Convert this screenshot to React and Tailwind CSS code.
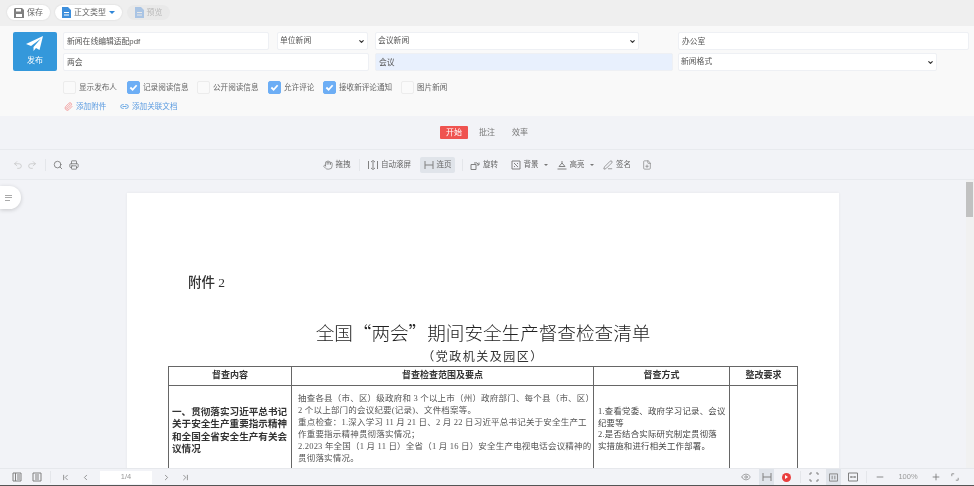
import React from "react";
import { ChevronDown, ChevronFirst, ChevronLast, ChevronLeft, ChevronRight, Eye, FilePlus, Hand, Link2, Minus, Paperclip, PenLine, Plus, Printer, Redo2, Search, Undo2 } from "lucide-react";

const cjk = "font-['Liberation_Sans','Noto_Sans_CJK_SC',sans-serif]";
const serif = "font-['Liberation_Serif','Noto_Sans_CJK_SC',serif]";

function Check({ on, label, gap }) {
  return (
    <label className={`flex items-center gap-[3px] ${gap}`}>
      <span className={`w-[13px] h-[13px] rounded-[2px] border flex items-center justify-center ${on ? "bg-[#6daef5] border-[#6daef5]" : "bg-[#fafafa] border-[#ececec]"}`}>
        {on && (
          <svg width="9" height="9" viewBox="0 0 10 10" fill="none" stroke="white" strokeWidth="2">
            <path d="M1.5 5 L4 7.5 L8.5 2.5" />
          </svg>
        )}
      </span>
      <span className="text-[7.6px] text-[#666]">{label}</span>
    </label>
  );
}

function Field({ w, value, bg = "bg-white" }) {
  return (
    <input
      readOnly
      value={value}
      className={`block h-[18px] ${w} ${bg} border border-[#eef0f4] rounded-[2px] px-[3px] pb-[2px] text-[7.8px] text-[#555] outline-none`}
    />
  );
}

function Drop({ w, value }) {
  return (
    <div className={`relative h-[18px] ${w}`}>
      <select
        value={value}
        onChange={() => {}}
        className="block appearance-none w-full h-full bg-white border border-[#eef0f4] rounded-[2px] pl-[2px] text-[7.8px] text-[#555] outline-none"
      >
        <option>{value}</option>
      </select>
      <ChevronDown size={7} strokeWidth={4} className="absolute right-[3px] top-[6px] text-[#333] pointer-events-none" />
    </div>
  );
}

function Pill({ icon, label, w, disabled, caret }) {
  return (
    <button className={`h-[15px] ${w} rounded-full flex items-center justify-center gap-[3px] text-[8px] ${disabled ? "bg-[#e9e9e9] text-[#bbb]" : "bg-white text-[#666] shadow-[0_0_2px_rgba(0,0,0,0.12)]"}`}>
      {icon}
      {label}
      {caret && <span className="w-0 h-0 border-x-[3px] border-x-transparent border-t-[3px] border-t-[#2f86d8]" />}
    </button>
  );
}

function Tool({ icon, label, w, active, caret }) {
  return (
    <div className={`h-[16px] ${w} flex items-center justify-center gap-[3px] whitespace-nowrap rounded-[2px] text-[7.5px] text-[#666] shrink-0 ${active ? "bg-[#e0e4ea]" : ""}`}>
      {icon}
      {label}
      {caret && <span className="ml-[2px] w-0 h-0 border-x-[2px] border-x-transparent border-t-[2px] border-t-[#777]" />}
    </div>
  );
}

const Sep = ({ h = "h-[12px]", m = "" }) => <span className={`w-px ${h} bg-[#e4e6ea] shrink-0 ${m}`} />;
const ic = { size: 10, strokeWidth: 1.5 };

// small toolbar drawings that the icon packages do not have
function Svg({ d, s = 10 }) {
  return (
    <svg width={s} height={s} viewBox="0 0 10 10" fill="none" stroke="#808080" strokeWidth="1" className="shrink-0">
      <path d={d} />
    </svg>
  );
}
const HPage = () => <Svg d="M1 1 V9 M9 1 V9 M1 5 H9" />;
const AutoScroll = () => <Svg d="M.5 1 V9 M9.5 1 V9 M5 1.5 V8.5 M3 2 L5 .5 L7 2 M3 8 L5 9.5 L7 8" />;
const Rotate = () => <Svg d="M1 4.5 H6 V9.5 H1 Z M4 3 A4 4 0 0 1 9 5 M9 2.5 V5 H6.8" />;
const Background = () => <Svg d="M1 1 H9 V9 H1 Z M3 3 L7 7 M3 6 L4 7 M6 3 L7 4" />;
const Highlight = () => <Svg d="M2 6.5 L5 3 L8 6.5 M5 1 V3 M.5 9 H9.5 M2 6.5 H8" />;
const ListLeft = () => <Svg d="M1 1 H9 V9 H1 Z M3.5 1 V9 M5 3 H8 M5 5 H8 M5 7 H8" />;
const ListRight = () => <Svg d="M1 1 H9 V9 H1 Z M3 3 H7 M3 5 H7 M3 7 H7" />;
const Corners = () => <Svg d="M1 3 V1 H3 M7 1 H9 V3 M9 7 V9 H7 M3 9 H1 V7" />;
const Columns = () => <Svg s={9} d="M.5 1 H9.5 V9 H.5 Z M3.5 3 V7 M6.5 3 V7" />;
const FitWidth = () => <Svg d="M.5 1 H9.5 V9 H.5 Z M2.5 5 H7.5 M3.5 4 L2.5 5 L3.5 6 M6.5 4 L7.5 5 L6.5 6" />;
const FitSmall = () => <Svg s={8} d="M1 4 V1 H4 M6 9 H9 V6" />;

const col2 = [
  "抽查各县（市、区）级政府和 3 个以上市（州）政府部门、每个县（市、区）",
  "2 个以上部门的会议纪要(记录)、文件档案等。",
  "重点检查：1.深入学习 11 月 21 日、2 月 22 日习近平总书记关于安全生产工",
  "作重要指示精神贯彻落实情况；",
  "2.2023 年全国（1 月 11 日）全省（1 月 16 日）安全生产电视电话会议精神的",
  "贯彻落实情况。",
];
const col1 = ["一、贯彻落实习近平总书记", "关于安全生产重要指示精神", "和全国全省安全生产有关会", "议情况"];
const col3 = ["1.查看党委、政府学习记录、会议", "纪要等", "2.是否结合实际研究制定贯彻落", "实措施和进行相关工作部署。"];

export default function App() {
  return (
    <div className={`w-[974px] h-[486px] overflow-hidden flex flex-col bg-[#f2f3f7] blur-[0.3px] ${cjk}`}>
      {/* top buttons */}
      <div className="h-[26px] shrink-0 bg-[#efefef] flex items-center pl-[7px] pb-[1px]">
        <Pill
          w="w-[43px]"
          label="保存"
          icon={
            <svg width="10" height="10" viewBox="0 0 10 10" fill="#808080">
              <path d="M1 0 H8 L10 2 V10 H0 V1 Z M2 1 V3.5 H7 V1 Z M2 6 V9 H8 V6 Z" fillRule="evenodd" />
            </svg>
          }
        />
        <span className="w-[5px]" />
        <Pill
          w="w-[67px]"
          label="正文类型"
          caret
          icon={
            <svg width="9" height="11" viewBox="0 0 9 11" fill="#3d8fdc">
              <path d="M0 0 H6 L9 3 V11 H0 Z M2 5 V6 H7 V5 Z M2 7.5 V8.5 H7 V7.5 Z" fillRule="evenodd" />
            </svg>
          }
        />
        <span className="w-[5px]" />
        <Pill
          w="w-[43px]"
          label="预览"
          disabled
          icon={
            <svg width="9" height="11" viewBox="0 0 9 11" fill="#a9c4e4">
              <path d="M0 0 H6 L9 3 V11 H0 Z M2 5 V6 H7 V5 Z M2 7.5 V8.5 H7 V7.5 Z" fillRule="evenodd" />
            </svg>
          }
        />
      </div>

      {/* form */}
      <div className="h-[90px] shrink-0 bg-[#f9f9f9] pt-[6px] pl-[13px]">
        <div className="flex">
          <button className="w-[44px] h-[39px] bg-[#3498db] rounded-[2px] flex flex-col items-center justify-center text-white text-[8px] gap-[3px] shrink-0">
            <svg width="18" height="16" viewBox="0 0 18 16" fill="white">
              <path d="M17 0 L0 8 L5 10 L15 2.5 L7.5 11 L7.5 15 L10 12 L13.5 14 Z" />
            </svg>
            发布
          </button>
          <div className="ml-[6px] flex flex-col gap-[3px]">
            <div className="flex">
              <Field w="w-[206px]" value="新闻在线编辑适配pdf" />
              <span className="w-[8px]" />
              <Drop w="w-[91px]" value="单位新闻" />
              <span className="w-[7px]" />
              <Drop w="w-[264px]" value="会议新闻" />
              <span className="w-[39px]" />
              <Field w="w-[291px]" value="办公室" />
            </div>
            <div className="flex">
              <Field w="w-[306px]" value="两会" />
              <span className="w-[6px]" />
              <Field w="w-[298px]" value="会议" bg="bg-[#e8f0fd]" />
              <span className="w-[5px]" />
              <Drop w="w-[259px]" value="新闻格式" />
            </div>
          </div>
        </div>
        <div className="flex ml-[50px] mt-[10px]">
          <Check label="显示发布人" gap="w-[64px]" />
          <Check on label="记录阅读信息" gap="w-[70px]" />
          <Check label="公开阅读信息" gap="w-[71px]" />
          <Check on label="允许评论" gap="w-[55px]" />
          <Check on label="接收新评论通知" gap="w-[78px]" />
          <Check label="图片新闻" />
        </div>
        <div className="flex ml-[51px] mt-[7px] text-[7.6px] text-[#5b9be0]">
          <span className="flex items-center gap-[3px] w-[56px]">
            <Paperclip size={9} strokeWidth={2} className="text-[#ef8a8a]" />
            添加附件
          </span>
          <span className="flex items-center gap-[3px]">
            <Link2 size={9} strokeWidth={2} className="text-[#3d8fdc]" />
            添加关联文档
          </span>
        </div>
      </div>

      {/* viewer tabs */}
      <div className="h-[34px] shrink-0 flex items-start justify-center pt-[10px] pr-[6px] text-[8px] text-[#777] border-b border-[#e8eaee]">
        <span className="w-[28px] h-[13px] bg-[#ef5350] text-white rounded-[1px] flex items-center justify-center">开始</span>
        <span className="ml-[11px] h-[13px] flex items-center">批注</span>
        <span className="ml-[17px] h-[13px] flex items-center">效率</span>
      </div>

      {/* viewer toolbar */}
      <div className="h-[30px] shrink-0 flex items-center border-b border-[#e8eaee] text-[#777]">
        <div className="w-[321px] flex items-center pl-[13px] shrink-0">
          <Undo2 {...ic} className="text-[#bbb]" />
          <Redo2 {...ic} className="text-[#bbb] ml-[4px]" />
          <Sep m="ml-[8px]" />
          <Search {...ic} strokeWidth={2} className="ml-[7px]" />
          <Printer {...ic} strokeWidth={2} className="ml-[6px]" />
        </div>
        <Tool w="w-[31px]" label="拖拽" icon={<Hand {...ic} />} />
        <Sep m="ml-[7px]" />
        <span className="w-[7px]" />
        <Tool w="w-[45px]" label="自动滚屏" icon={<AutoScroll />} />
        <span className="w-[8px]" />
        <Tool w="w-[35px]" active label="连页" icon={<HPage />} />
        <Sep m="mx-[7px]" />
        <Tool w="w-[28px]" label="旋转" icon={<Rotate />} />
        <span className="w-[12px]" />
        <Tool w="w-[38px]" caret label="背景" icon={<Background />} />
        <span className="w-[9px]" />
        <Tool w="w-[36px]" caret label="高亮" icon={<Highlight />} />
        <span className="w-[10px]" />
        <Tool w="w-[28px]" label="签名" icon={<PenLine {...ic} />} />
        <FilePlus {...ic} className="ml-[11px]" />
      </div>

      {/* document */}
      <div className="relative flex-1 min-h-0 flex overflow-hidden">
        <div className="absolute left-0 top-[6px] w-[21px] h-[23px] bg-white rounded-r-full shadow-[0_1px_4px_rgba(0,0,0,0.18)] flex flex-col justify-center gap-[1.5px] pl-[5px]">
          <span className="w-[7px] h-px bg-[#aaa]" />
          <span className="w-[7px] h-px bg-[#aaa]" />
          <span className="w-[5px] h-px bg-[#aaa]" />
        </div>
        <div className="flex-1 min-w-0 pt-[13px] overflow-hidden">
          <div className="w-[712px] h-[400px] mx-auto bg-white shadow-[0_0_3px_rgba(0,0,0,0.06)] pt-[81px] pl-[41px]">
            <p className={`pl-[20px] text-[13.5px] font-medium text-[#333] leading-[18px] ${serif}`}>附件 2</p>
            <h1 className="mt-[28px] w-[630px] text-center text-[18.6px] leading-[24px] text-[#222] font-['Noto_Sans_CJK_SC',serif] font-light">全国“两会”期间安全生产督查检查清单</h1>
            <p className={`mt-[4px] w-[630px] text-center text-[12px] tracking-[1.5px] leading-[18px] text-[#333] ${serif}`}>（党政机关及园区）</p>
            <table className={`w-[630px] table-fixed border-collapse border border-[#666] text-[#333] ${serif}`}>
              <colgroup>
                <col className="w-[123px]" />
                <col className="w-[302px]" />
                <col className="w-[136px]" />
                <col className="w-[68px]" />
              </colgroup>
              <thead>
                <tr className="h-[19px] text-[9px] font-bold">
                  <th className="border border-[#666]">督查内容</th>
                  <th className="border border-[#666]">督查检查范围及要点</th>
                  <th className="border border-[#666]">督查方式</th>
                  <th className="border border-[#666]">整改要求</th>
                </tr>
              </thead>
              <tbody>
                <tr className="h-[120px]">
                  <td className="border border-[#666] align-top pt-[20px] pl-[3px] text-[9.6px] font-bold leading-[12.3px] whitespace-nowrap">
                    {col1.map((t) => <div key={t}>{t}</div>)}
                  </td>
                  <td className="border border-[#666] align-top pt-[6px] pl-[6px] text-[8.5px] tracking-[0.2px] leading-[12px] whitespace-nowrap text-[#555]">
                    {col2.map((t) => <div key={t}>{t}</div>)}
                  </td>
                  <td className="border border-[#666] align-top pt-[20px] pl-[4px] text-[8.4px] tracking-[0.25px] leading-[11.7px] whitespace-nowrap text-[#444]">
                    {col3.map((t) => <div key={t}>{t}</div>)}
                  </td>
                  <td className="border border-[#666]" />
                </tr>
              </tbody>
            </table>
          </div>
        </div>
        <div className="w-[8px] shrink-0 bg-[#f1f1f1] pt-[2px]">
          <div className="h-[35px] w-[7px] bg-[#c1c1c1]" />
        </div>
      </div>

      {/* status bar */}
      <div className="h-[17px] shrink-0 bg-[#f2f3f7] border-t border-[#e6e8ec] flex items-center text-[#777] text-[7.5px]">
        <span className="ml-[12px]"><ListLeft /></span>
        <span className="ml-[10px]"><ListRight /></span>
        <Sep m="ml-[8px]" />
        <ChevronFirst size={9} strokeWidth={2} className="ml-[10px]" />
        <ChevronLeft size={9} strokeWidth={2} className="ml-[11px]" />
        <span className="ml-[10px] w-[52px] h-[13px] bg-white flex items-center justify-center text-[#999]">1/4</span>
        <ChevronRight size={9} strokeWidth={2} className="ml-[10px]" />
        <ChevronLast size={9} strokeWidth={2} className="ml-[10px]" />
        <span className="flex-1" />
        <Eye {...ic} />
        <span className="ml-[8px] w-[15px] h-[16px] bg-[#e0e4ea] flex items-center justify-center"><HPage /></span>
        <span className="ml-[8px] w-[9px] h-[9px] rounded-full bg-[#ea3f3f] flex items-center justify-center">
          <span className="w-0 h-0 border-y-[2px] border-y-transparent border-l-[3px] border-l-white" />
        </span>
        <Sep m="ml-[9px]" />
        <span className="ml-[8px]"><Corners /></span>
        <span className="ml-[7px] w-[15px] h-[16px] bg-[#e0e4ea] flex items-center justify-center"><Columns /></span>
        <span className="ml-[7px]"><FitWidth /></span>
        <Sep m="ml-[8px]" />
        <Minus {...ic} strokeWidth={2} className="ml-[8px]" />
        <span className="ml-[11px] w-[24px] text-center text-[#999]">100%</span>
        <Plus {...ic} strokeWidth={2} className="ml-[11px]" />
        <span className="ml-[10px] mr-[15px]"><FitSmall /></span>
      </div>
      <div className="h-[1px] shrink-0 bg-[#555]" />
    </div>
  );
}
